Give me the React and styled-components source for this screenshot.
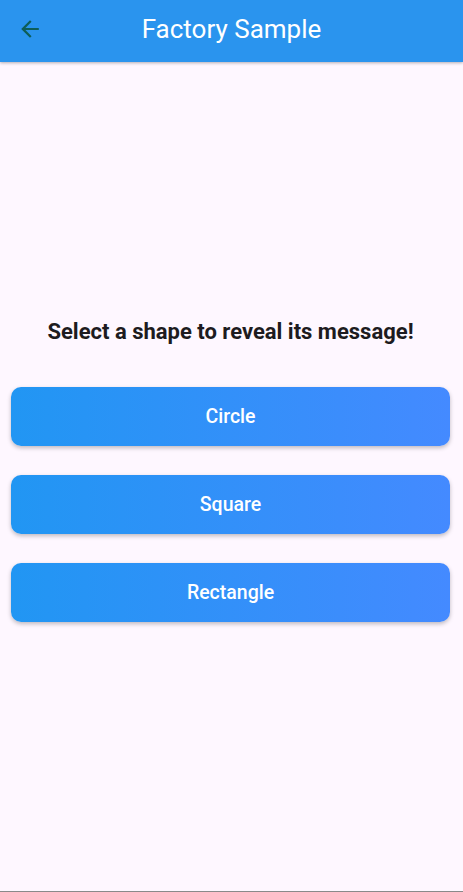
import React from "react";
import styled, { createGlobalStyle } from "styled-components";

const GlobalStyle = createGlobalStyle`
    html, body {
        margin: 0;
        padding: 0;
        background-color: #FEF7FF;
    }
    * {
        box-sizing: border-box;
    }
`;

const shapes = ["Circle", "Square", "Rectangle"];

export default function App() {
    return (
        <>
            <GlobalStyle />
            <Page>
                <AppBar>
                    <BackButton aria-label="back">
                        <svg width="24" height="24" viewBox="0 0 24 24">
                            <path d="M20 11H7.83l5.59-5.59L12 4l-8 8 8 8 1.41-1.41L7.83 13H20v-2z" fill="#0D5E58" />
                        </svg>
                    </BackButton>
                    <Title>Factory Sample</Title>
                </AppBar>
                <Body>
                    <Heading>Select a shape to reveal its message!</Heading>
                    {shapes.map(shape => (
                        <ShapeButton key={shape}>{shape}</ShapeButton>
                    ))}
                </Body>
                <BottomLine />
            </Page>
        </>
    );
}

const Page = styled.div`
    font-family: Roboto, "Noto Sans", sans-serif;
    width: 100%;
    height: 892px;
    display: flex;
    flex-direction: column;
    background-color: #FEF7FF;
`;

const AppBar = styled.header`
    height: 62px;
    flex-shrink: 0;
    background-color: #2A94EE;
    display: flex;
    align-items: center;
    padding-bottom: 4px;
    box-shadow: 0 1px 3px rgba(0, 0, 0, 0.3);
    z-index: 1;
`;

const BackButton = styled.button`
    width: 48px;
    height: 48px;
    margin-left: 6px;
    border: none;
    background: none;
    padding: 0;
    display: flex;
    align-items: center;
    justify-content: center;

    svg {
        transform: scale(1.1);
    }
`;

const Title = styled.h1`
    margin: 0;
    flex: 1;
    text-align: center;
    margin-right: 54px;
    font-size: 26px;
    font-weight: 400;
    color: #FFFFFF;
`;

const Body = styled.main`
    flex: 1;
    display: flex;
    flex-direction: column;
    justify-content: center;
    padding: 0 13px 12px 11px;
    gap: 29px;
`;

const Heading = styled.h2`
    margin: 0 0 13px;
    line-height: 26px;
    text-align: center;
    font-size: 22px;
    font-weight: 700;
    color: #1D1B20;
`;

const ShapeButton = styled.button`
    font-family: Roboto, "Noto Sans", sans-serif;
    height: 59px;
    width: 100%;
    border: none;
    border-radius: 10px;
    background: linear-gradient(90deg, #2196F3, #448AFF);
    color: #FFFFFF;
    font-size: 19.5px;
    font-weight: 500;
    box-shadow: 0 2px 4px rgba(0, 0, 0, 0.25);
`;

const BottomLine = styled.div`
    height: 1px;
    flex-shrink: 0;
    background-color: #8A8A8A;
`;
